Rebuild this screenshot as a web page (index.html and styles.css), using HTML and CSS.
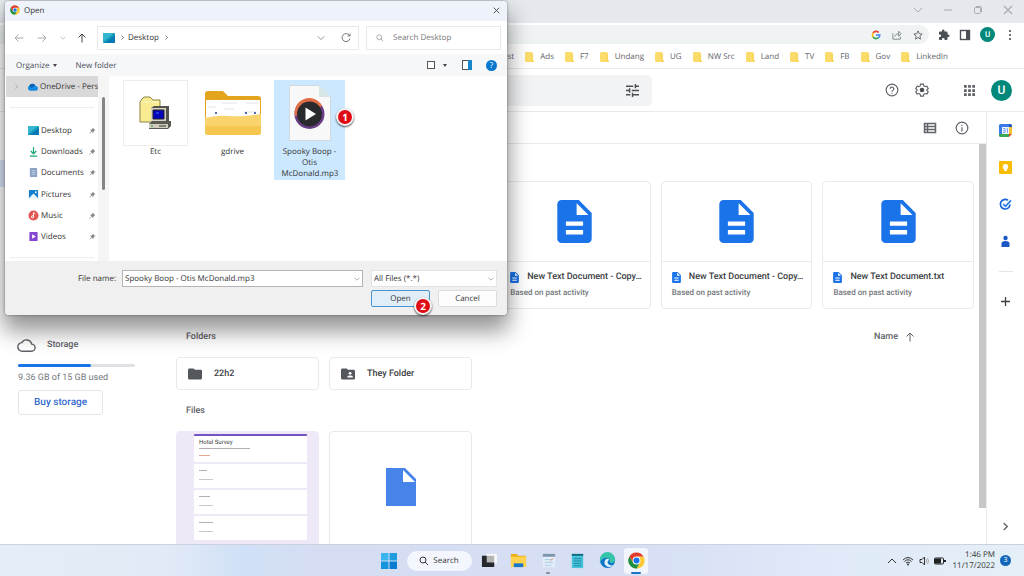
FILE: index.html
```html
<!DOCTYPE html>
<html lang="en">
<head>
<meta charset="utf-8">
<title>Google Drive</title>
<link rel="stylesheet" href="styles.css">
</head>
<body>
<svg class="defs" aria-hidden="true">
  <symbol id="chrome" viewBox="0 0 48 48">
    <path d="M24 13H44A23 23 0 0 1 24 47L34 29Z" fill="#fcc934"/>
    <path d="M14 29 4 12.500A23 23 0 0 0 24 47L34 29Z" fill="#1e8e3e"/>
    <path d="M24 13H44A23 23 0 0 0 4 12.500L14 29Z" fill="#e33b2e"/>
    <circle cx="24" cy="24" r="11" fill="#fff"/><circle cx="24" cy="24" r="8.500" fill="#1a73e8"/>
  </symbol>
  <symbol id="down" viewBox="0 0 10 10"><path d="M1 3 5 7 9 3" fill="none" stroke="currentColor"/></symbol>
  <symbol id="right" viewBox="0 0 10 10"><path d="M3 1 7 5 3 9" fill="none" stroke="currentColor" stroke-width="1.500"/></symbol>
  <symbol id="close" viewBox="0 0 10 10"><path d="M1 1 9 9M9 1 1 9" fill="none" stroke="currentColor" stroke-width="1.200"/></symbol>
  <symbol id="search" viewBox="0 0 10 10"><circle cx="4" cy="4" r="3" fill="none" stroke="currentColor"/><path d="M6 6 9 9" stroke="currentColor"/></symbol>
  <symbol id="doc" viewBox="4 2 16 20"><path d="M14 2H6a2 2 0 0 0-2 2v16a2 2 0 0 0 2 2h12a2 2 0 0 0 2-2V8Z" fill="#1a73e8"/><path d="M13 3.500V9h5.500Z" fill="#fff"/><path d="M8 12h8v2H8zM8 16h8v2H8z" fill="#fff"/></symbol>
  <symbol id="mark" viewBox="0 0 9 11"><path d="M0 1.500Q0 0 1.500 0H6l2 1v7l1 1v1H1.500Q0 10 0 8.500Z" fill="#fbdc6b"/><path d="M7 2v7h1.500" fill="none" stroke="#f5cf52"/></symbol>
  <symbol id="pin" viewBox="0 0 10 10"><path d="M5.500 1 9 4.500 8 5 6.500 6.500 6 9 1.500 4 4 3.500 5 2Z" fill="#85898d"/><path d="M3.500 6.500 1 9" stroke="#707478"/></symbol>
  <symbol id="desk" viewBox="0 0 12 10"><rect width="12" height="10" rx="1" fill="#129bb9"/><path d="M0 9V1q0-1 1-1h10Z" fill="#35b6d0"/><path d="M2 10 12 2v7q0 1-1 1Z" fill="#0879b5"/></symbol>
  <symbol id="uparrow" viewBox="0 0 10 10"><path d="M5 9.500V1M1.500 4.500 5 1 8.500 4.500" fill="none" stroke="currentColor"/></symbol>
</svg>

<div class="browser">
  <div class="titlebar">
    <button aria-label="Search tabs"><svg><use href="#down"/></svg></button>
    <button aria-label="Minimize"><svg viewBox="0 0 10 10"><path d="M1 5H9" stroke="currentColor"/></svg></button>
    <button aria-label="Restore"><svg viewBox="0 0 10 10"><rect x="1.500" y="2.500" width="6" height="6" rx="1" fill="none" stroke="currentColor"/><path d="M3 1.500H7Q8.500 1.500 8.500 3V7" fill="none" stroke="currentColor"/></svg></button>
    <button aria-label="Close"><svg><use href="#close"/></svg></button>
  </div>
  <div class="toolbar">
    <div class="omnibox">
      <svg viewBox="0 0 24 24"><g fill="none" stroke-width="4"><path d="M5 7A9 9 0 0 1 18.500 6" stroke="#ea4335"/><path d="M5 17A9 9 0 0 1 5 7" stroke="#fbbc05"/><path d="M18 18.500A9 9 0 0 1 5 17" stroke="#34a853"/><path d="M12 12H21A9 9 0 0 1 18 18.500" stroke="#4285f4"/></g></svg>
      <svg viewBox="0 0 12 12"><path d="M1 4V11H10V8M3 8Q4 4.500 8 4.500M8 1.500 11 4.500 8 7.500Z" fill="none" stroke="#74787c"/></svg>
      <svg viewBox="0 0 24 24"><path d="m12 2 3 7 7 .6-5.500 5L18 22l-6-4-6 4 1.500-7.400L2 9.600 9 9Z" fill="none" stroke="#5f6368" stroke-width="2.200"/></svg>
    </div>
    <button aria-label="Extensions"><svg viewBox="0 0 24 24"><path d="M20.500 11H19V7a2 2 0 0 0-2-2h-4V3.500a2.500 2.500 0 0 0-5 0V5H4a2 2 0 0 0-2 2v3.800h1.500a2.700 2.700 0 0 1 0 5.400H2V20a2 2 0 0 0 2 2h3.800v-1.500a2.700 2.700 0 0 1 5.400 0V22H17a2 2 0 0 0 2-2v-4h1.500a2.500 2.500 0 0 0 0-5Z" fill="#4c5054"/></svg></button>
    <button aria-label="Side panel"><svg viewBox="0 0 12 12"><rect x="1.500" y="1.500" width="9" height="9" fill="none" stroke="#4c5054" stroke-width="1.400"/><path d="M7 1H11V11H7Z" fill="#4c5054"/></svg></button>
    <button class="avatar small" aria-label="Profile">U</button>
    <button aria-label="Menu"><svg viewBox="0 0 12 12"><g fill="#4c5054"><circle cx="6" cy="2" r="1.100"/><circle cx="6" cy="6" r="1.100"/><circle cx="6" cy="10" r="1.100"/></g></svg></button>
  </div>
  <nav class="bookmarks">
    <a href="#">st</a>
    <a href="#"><svg><use href="#mark"/></svg>Ads</a>
    <a href="#"><svg><use href="#mark"/></svg>F7</a>
    <a href="#"><svg><use href="#mark"/></svg>Undang</a>
    <a href="#"><svg><use href="#mark"/></svg>UG</a>
    <a href="#"><svg><use href="#mark"/></svg>NW Src</a>
    <a href="#"><svg><use href="#mark"/></svg>Land</a>
    <a href="#"><svg><use href="#mark"/></svg>TV</a>
    <a href="#"><svg><use href="#mark"/></svg>FB</a>
    <a href="#"><svg><use href="#mark"/></svg>Gov</a>
    <a href="#"><svg><use href="#mark"/></svg>LinkedIn</a>
  </nav>
  <header class="drive-head">
    <div class="drive-search">
      <button aria-label="Search options"><svg viewBox="3 3 18 18"><path d="M3 17v2h6v-2zm0-12v2h10V5zm10 16v-2h8v-2h-8v-2h-2v6zM7 9v2H3v2h4v2h2V9zm14 4v-2H11v2zm-6-4h2V7h4V5h-4V3h-2z" fill="#4c5054"/></svg></button>
    </div>
    <div class="head-tools">
      <button aria-label="Help"><svg viewBox="0 0 24 24"><circle cx="12" cy="12" r="10" fill="none" stroke="#5f6368" stroke-width="2"/><path d="M9 10a3 3 0 1 1 5 2.200Q12 13.500 12 15" fill="none" stroke="#5f6368" stroke-width="2"/><path d="M11 16.500h2v2h-2z" fill="#5f6368"/></svg></button>
      <button aria-label="Settings"><svg viewBox="0 0 24 24"><path d="m9.500 2-.6 3-2.400 1.300L3.600 5.400 1.300 9.500l2.200 2v1.500l-2.200 2 2.300 4 2.900-.9L9 19.500l.6 2.900h4.800l.6-2.900 2.500-1.400 2.900.9 2.300-4-2.200-2v-1.500l2.200-2-2.300-4.100-2.900.9L15 5l-.6-3Z" fill="none" stroke="#5f6368" stroke-width="2"/><circle cx="12" cy="12" r="4" fill="#4c5054"/></svg></button>
      <button class="apps" aria-label="Google apps"><svg viewBox="0 0 12 12"><path d="M0 0h3v3H0zM4.500 0h3v3h-3zM9 0h3v3H9zM0 4.500h3v3H0zM4.500 4.500h3v3h-3zM9 4.500h3v3H9zM0 9h3v3H0zM4.500 9h3v3h-3zM9 9h3v3H9z" fill="#5f6368"/></svg></button>
      <button class="avatar" aria-label="Account">U</button>
    </div>
  </header>
  <div class="drive">
    <aside class="sidebar">
      <div class="current"></div>
      <div class="storage">
        <div class="storage-title">
          <svg viewBox="0 0 24 24"><path d="M19.300 10A7.500 7.500 0 0 0 5.400 8 6 6 0 0 0 6 20h13a5 5 0 0 0 .3-10Z" fill="none" stroke="#5f6368" stroke-width="2"/></svg>
          <span>Storage</span>
        </div>
        <div class="meter"><div class="meter-fill" style="width:62%"></div></div>
        <p>9.36 GB of 15 GB used</p>
        <button class="buy">Buy storage</button>
      </div>
    </aside>
    <main class="main">
      <div class="view-tools">
        <button aria-label="List view"><svg viewBox="0 0 14 12"><path d="M1.500 1.500H12.500V10.500H1.500ZM4.500 1V11M1 4.500H13M1 7.500H13" fill="none" stroke="#5f6368" stroke-width="1.500"/></svg></button>
        <button aria-label="Details"><svg viewBox="0 0 24 24"><circle cx="12" cy="12" r="10" fill="none" stroke="#5f6368" stroke-width="2"/><path d="M11 6.500h2v2h-2zM11 10.500h2V18h-2z" fill="#5f6368"/></svg></button>
      </div>
      <div class="scroller">
        <div class="content">
          <div class="suggested">
            <article class="card"><div class="card-preview"><svg><use href="#doc"/></svg></div><div class="card-info"><h3><svg><use href="#doc"/></svg>New Text Document - Copy…</h3><p>Based on past activity</p></div></article>
            <article class="card"><div class="card-preview"><svg><use href="#doc"/></svg></div><div class="card-info"><h3><svg><use href="#doc"/></svg>New Text Document - Copy…</h3><p>Based on past activity</p></div></article>
            <article class="card"><div class="card-preview"><svg><use href="#doc"/></svg></div><div class="card-info"><h3><svg><use href="#doc"/></svg>New Text Document.txt</h3><p>Based on past activity</p></div></article>
          </div>
          <div class="section-head"><h2>Folders</h2><button class="sort">Name<svg><use href="#uparrow"/></svg></button></div>
          <div class="tiles">
            <a class="folder" href="#"><svg viewBox="2 4 20 16"><path d="M10 4H4a2 2 0 0 0-2 2v12a2 2 0 0 0 2 2h16a2 2 0 0 0 2-2V8a2 2 0 0 0-2-2h-8Z" fill="#54575b"/></svg>22h2</a>
            <a class="folder" href="#"><svg viewBox="2 4 20 16"><path d="M10 4H4a2 2 0 0 0-2 2v12a2 2 0 0 0 2 2h16a2 2 0 0 0 2-2V8a2 2 0 0 0-2-2h-8Z" fill="#54575b"/><circle cx="15" cy="11" r="2" fill="#fff"/><path d="M11 17v-1q0-2 4-2t4 2v1Z" fill="#fff"/></svg>They Folder</a>
          </div>
          <div class="section-head"><h2>Files</h2></div>
          <div class="tiles">
            <div class="file survey">
              <div class="sheet first"><b>Hotel Survey</b><i class="line long"></i><i class="line warn"></i></div>
              <div class="sheet"><i class="line tiny"></i><i class="line pale"></i></div>
              <div class="sheet"><i class="line mid"></i><i class="line pale"></i></div>
              <div class="sheet"><i class="line"></i><i class="line pale"></i></div>
            </div>
            <div class="file"><svg viewBox="0 0 30 38"><path d="M0 0H19L30 11V38H0Z" fill="#4784ea"/><path d="M17 2V14H29Z" fill="#fff"/></svg></div>
          </div>
        </div>
        <div class="track"><div class="thumb"></div></div>
      </div>
    </main>
    <aside class="panel">
      <svg viewBox="0 0 13 13"><path d="M0 1.500Q0 0 1.500 0H10V3H3V10H0Z" fill="#3979e8"/><path d="M10 0h1.500Q13 0 13 1.500V3H10Z" fill="#1d57c1"/><path d="M10 3h3v7h-3Z" fill="#fbc02d"/><path d="M3 10h7v3H1.500Q0 13 0 11.500V10Z" fill="#34a853"/><path d="M10 10h3l-3 3Z" fill="#ea4335"/><path d="M3 3h7v7H3Z" fill="#eef3fd"/><path d="M4 4.500H6V8.500H4M4.500 6.500H6M7.500 5 8.500 4.500V9" fill="none" stroke="#77a7f5"/></svg>
      <svg viewBox="0 0 13 13"><rect width="13" height="13" rx="1" fill="#fbbc04"/><circle cx="6.500" cy="5.700" r="2.700" fill="#fff"/><path d="M5.200 8h2.600v2H5.200Z" fill="#fff"/></svg>
      <svg viewBox="0 0 13 13"><path d="M9 2.300A4.800 4.800 0 1 0 11 6.500" fill="none" stroke="#1a66d6" stroke-width="1.700"/><path d="M4.200 6.200 6.500 8.300 12 2.300" fill="none" stroke="#2a7cf0" stroke-width="1.800"/></svg>
      <svg viewBox="0 0 13 13"><circle cx="6.500" cy="3" r="2.200" fill="#1a57c4"/><path d="M2.500 12V8.500Q2.500 6 6.500 6T10.500 8.500V12Z" fill="#1a57c4"/></svg>
      <hr>
      <button aria-label="Get add-ons"><svg viewBox="0 0 13 13"><path d="M6.500 2V11M2 6.500H11" stroke="#3c4043" stroke-width="1.300"/></svg></button>
      <button class="hide" aria-label="Hide side panel"><svg><use href="#right"/></svg></button>
    </aside>
  </div>
</div>

<footer class="taskbar">
  <div class="pinned">
    <button class="start" aria-label="Start"><svg viewBox="0 0 16 16"><path d="M0 0h7.500v7.500H0z" fill="#38b4ee"/><path d="M8.500 0H16v7.500H8.500z" fill="#209ce0"/><path d="M0 8.500h7.500V16H0z" fill="#1494dd"/><path d="M8.500 8.500H16V16H8.500z" fill="#087cd0"/></svg></button>
    <button class="find"><svg><use href="#search"/></svg>Search</button>
    <div class="apps-row">
      <button aria-label="Task view"><svg viewBox="0 0 18 18"><path d="M6 2h11v10H6z" fill="#f8f8f8"/><path d="M5 4h9v8H5z" fill="#b4b4b4"/><path d="M1 4h5v7h8v5H1Z" fill="#25272a"/></svg></button>
      <button aria-label="File Explorer"><svg viewBox="0 0 18 18"><path d="M1 2h6l2 2h8v12H1Z" fill="#edae19"/><path d="M1 5h16v11H1z" fill="#ffd34e"/><path d="M4 12h10v4H4z" fill="#1777c9"/></svg></button>
      <button class="running" aria-label="Window"><svg viewBox="0 0 18 18"><path d="M3 2h13v14H3z" fill="#e3eefa"/><path d="M3 2h13v3H3z" fill="#7d94ad"/><path d="M5 8h7M5 11h9M5 14h7" stroke="#aac9e5"/><path d="M11 9 14 7" stroke="#e78b62"/></svg></button>
      <button aria-label="Notepad"><svg viewBox="0 0 18 18"><path d="M3 2h12v15H3z" fill="#45c3da"/><path d="M3 2h12v2H3z" fill="#15697e"/><path d="M5 7h8M5 9.500h8M5 12h8M5 14.500h8" stroke="#2389a3"/></svg></button>
      <button aria-label="Edge"><svg viewBox="0 0 18 18"><circle cx="9" cy="9" r="8" fill="#1276c8"/><path d="M1 8A8 8 0 0 1 17 8Q17 12 12 11.500 11 11 11.500 9 11 6 7.500 6 3 6 1 11Z" fill="#35c4aa"/><path d="M7 8Q4 12 8 15 12 17 15 14 10 14.500 9 11Q9 9 11 8.500 9 6 7 8Z" fill="#e1f2fb"/></svg></button>
      <button class="active" aria-label="Chrome"><svg><use href="#chrome"/></svg></button>
    </div>
  </div>
  <div class="tray">
    <svg viewBox="0 0 10 10"><path d="M1 7 5 3 9 7" fill="none" stroke="#333"/></svg>
    <svg class="wifi" viewBox="0 0 12 10"><path d="M1 4Q6-1 11 4M2.500 5.500Q6 2 9.500 5.500M4 7Q6 5 8 7" fill="none" stroke="#333"/><circle cx="6" cy="8.500" r="1" fill="#333"/></svg>
    <svg viewBox="0 0 10 10"><path d="M1 3.500H3L5.500 1V9L3 6.500H1Z" fill="none" stroke="#333"/><path d="M7 3Q8.500 5 7 7M8.500 2Q10.500 5 8.500 8" fill="none" stroke="#aaa"/></svg>
    <svg class="battery" viewBox="0 0 12 10"><rect x=".5" y="2" width="9" height="6" rx="1" fill="none" stroke="#222"/><path d="M1 2.500h6v5H1zM10 4h2v2h-2z" fill="#222"/></svg>
    <div class="clock"><span>1:46 PM</span><span>11/17/2022</span></div>
    <span class="count">3</span>
  </div>
</footer>

<section class="dialog" role="dialog" aria-label="Open">
  <div class="dialog-title"><svg class="logo"><use href="#chrome"/></svg><span>Open</span><button aria-label="Close"><svg><use href="#close"/></svg></button></div>
  <div class="dialog-nav">
    <div class="arrows">
      <svg viewBox="0 0 10 10"><path d="M9.500 5H1M4.500 1.500 1 5 4.500 8.500" fill="none" stroke="#aaa"/></svg>
      <svg viewBox="0 0 10 10"><path d="M.5 5H9M5.500 1.500 9 5 5.500 8.500" fill="none" stroke="#aaa"/></svg>
      <svg class="mini"><use href="#down"/></svg>
      <svg class="up"><use href="#uparrow"/></svg>
    </div>
    <div class="address">
      <svg class="place"><use href="#desk"/></svg><svg class="sep"><use href="#right"/></svg><span>Desktop</span><svg class="sep"><use href="#right"/></svg>
      <svg class="drop"><use href="#down"/></svg>
      <svg class="reload" viewBox="0 0 10 10"><path d="M8.500 2.500A4 4 0 1 0 9 5.500M9 .5V3H6.500" fill="none" stroke="#777"/></svg>
    </div>
    <label class="search-box"><svg><use href="#search"/></svg><input type="text" placeholder="Search Desktop" aria-label="Search Desktop"></label>
  </div>
  <div class="commands">
    <button>Organize<span class="caret"></span></button>
    <button>New folder</button>
    <div class="views">
      <svg viewBox="0 0 10 10"><rect x="1.500" y="1.500" width="7" height="7" fill="#fff" stroke="#555"/></svg>
      <span class="caret"></span>
      <svg class="split" viewBox="0 0 10 10"><rect x=".5" y=".5" width="9" height="9" fill="#fff" stroke="#555"/><path d="M6 0h4v10H6z" fill="#1685c9"/></svg>
      <span class="help">?</span>
    </div>
  </div>
  <div class="dialog-body">
    <nav class="places">
      <a class="cloud" href="#"><svg class="sep"><use href="#right"/></svg><svg class="ico" viewBox="0 0 12 8"><path d="M3 8A3 3 0 0 1 2.500 2.500 4 4 0 0 1 9.500 3 2.500 2.500 0 0 1 9.500 8Z" fill="#168be0"/><path d="M2.500 2.500A4 4 0 0 1 9 2L5 5Z" fill="#0a5fb4"/></svg><span>OneDrive - Personal</span></a>
      <div class="quick">
        <a href="#"><svg class="ico"><use href="#desk"/></svg><span>Desktop</span><svg class="pin"><use href="#pin"/></svg></a>
        <a href="#"><svg class="ico" viewBox="0 0 12 12"><path d="M6 1V8M3 5.500 6 8.500 9 5.500M2 11H10" fill="none" stroke="#18a779" stroke-width="1.300"/></svg><span>Downloads</span><svg class="pin"><use href="#pin"/></svg></a>
        <a href="#"><svg class="ico" viewBox="0 0 12 12"><rect x="2" y="1" width="8" height="10" rx="1" fill="#8ba2c4"/><path d="M4 4h4M4 6h4M4 8h4" stroke="#c3d0e4"/></svg><span>Documents</span><svg class="pin"><use href="#pin"/></svg></a>
        <a href="#"><svg class="ico" viewBox="0 0 12 12"><rect x="1" y="1" width="10" height="10" rx="1" fill="#1580cf"/><path d="M1 10 6 5 11 10V11H1Z" fill="#e8f6ff"/><circle cx="8.500" cy="3.500" r="1" fill="#fff"/></svg><span>Pictures</span><svg class="pin"><use href="#pin"/></svg></a>
        <a href="#"><svg class="ico" viewBox="0 0 12 12"><circle cx="6" cy="6" r="5.500" fill="#e25550"/><path d="M6 7.500V3L8 4" fill="none" stroke="#fff"/><circle cx="5" cy="7.500" r="1.200" fill="none" stroke="#fff"/></svg><span>Music</span><svg class="pin"><use href="#pin"/></svg></a>
        <a href="#"><svg class="ico" viewBox="0 0 12 12"><rect x="1.500" y="1" width="9" height="10" rx="1" fill="#8446d2"/><path d="M4.500 3.500 8.500 6 4.500 8.500Z" fill="#fff"/></svg><span>Videos</span><svg class="pin"><use href="#pin"/></svg></a>
      </div>
    </nav>
    <div class="side-scroll"><div></div></div>
    <div class="items">
      <div class="item">
        <div class="art boxed"><svg viewBox="0 0 34 34"><path d="M1 6 3 3 5 1h6l3 3h7v22H1Z" fill="#f8eb91" stroke="#8d8140"/><path d="M2 6h18" stroke="#fffac8"/><path d="m12 12 3-2h15v15l-2 3H12Z" fill="#55534e"/><path d="M12 12h15v14H12z" fill="#d5d1c4"/><path d="M14 14h11v9H14z" fill="#0505ba" stroke="#222"/><path d="M17 17h3" stroke="#4c6df5"/><path d="M10 28 13 25H32v5l-3 3H10Z" fill="#5b5953"/><path d="M10 28h19v4H10z" fill="#d0cdbf"/><path d="M20 30h7" stroke="#333"/><path d="M12 30h2" stroke="#1c9b36"/></svg></div>
        <span>Etc</span>
      </div>
      <div class="item">
        <div class="art"><svg class="wide" viewBox="0 0 58 46"><path d="M1 4Q1 1 4 1H19L24 6H54Q57 6 57 9V40H1Z" fill="#e3a51e"/><path d="M2 10H56V30H2Z" fill="#fff"/><path d="M18 13h15M42 13h12M4 17h8M20 19h10M40 22h12" stroke="#e0e3ea"/><path d="M11 22h2v2h-2zM41 22h2v2h-2zM50 22h2v2h-2z" fill="#5269b0"/><path d="M1 28Q14 25 25 26T57 24V42Q57 45 54 45H4Q1 45 1 42Z" fill="#f9d36b"/><path d="M1 36H57V42Q57 45 54 45H4Q1 45 1 42Z" fill="#f5c650"/></svg></div>
        <span>gdrive</span>
      </div>
      <div class="item selected">
        <div class="art"><svg class="tall" viewBox="0 0 42 56"><path d="M.5.5H30L41.500 12V55.500H.5Z" fill="#f8f8f8" stroke="#d1d9dd"/><path d="M30 .5V12H41.500Z" fill="#d9e6e6"/><circle cx="20.500" cy="29" r="15" fill="#693e86"/><path d="M6 31A14.500 14.500 0 0 1 33 21L20 30Z" fill="#e06d46"/><circle cx="20.500" cy="29" r="12.500" fill="#29292e"/><path d="M16.500 22.500 27 29 16.500 35.500Z" fill="#fff"/></svg></div>
        <span>Spooky Boop - Otis McDonald.mp3</span>
        <b class="badge one">1</b>
      </div>
    </div>
  </div>
  <form class="dialog-foot">
    <label for="name">File name:</label>
    <div class="combo"><input id="name" type="text" value="Spooky Boop - Otis McDonald.mp3"><svg><use href="#down"/></svg></div>
    <div class="combo type"><select aria-label="File type"><option>All Files (*.*)</option></select><svg><use href="#down"/></svg></div>
    <div class="actions">
      <button class="ok" type="button">Open<b class="badge two">2</b></button>
      <button type="button">Cancel</button>
    </div>
  </form>
</section>
</body>
</html>
```

FILE: styles.css
```css
* { box-sizing: border-box; }
body {
  margin: 0;
  height: 100vh;
  display: flex;
  flex-direction: column;
  overflow: hidden;
  background: #fff;
  color: #3c4043;
  font: 9px/12px Roboto, sans-serif;
  text-rendering: geometricPrecision;
}
.defs { display: none; }
svg { display: block; flex: none; width: 10px; height: 10px; overflow: visible; }
button { display: flex; align-items: center; justify-content: center; padding: 0; border: 0; background: none; color: inherit; font: inherit; text-rendering: inherit; }
a { color: inherit; text-decoration: none; }
h2, h3, p { margin: 0; font-size: 9px; font-weight: 500; }

/* Browser window */
.browser { flex: 1; min-height: 0; display: flex; flex-direction: column; }
.titlebar { display: flex; justify-content: flex-end; gap: 20px; height: 23px; padding: 5px 11px 8px; background: #e5e8ec; color: #a8acb0; }
.toolbar { display: flex; align-items: center; gap: 9px; height: 23px; padding-right: 8px; }
.omnibox { flex: 1; display: flex; align-items: center; justify-content: flex-end; gap: 11px; height: 19px; padding-right: 6px; border-radius: 0 10px 10px 0; background: #f0f3f4; }
.toolbar button svg { width: 12px; height: 12px; }
.avatar { width: 21px; height: 21px; border-radius: 50%; background: #00897b; color: #fff; font-size: 12px; font-weight: 500; }
.avatar.small { width: 15px; height: 15px; font-size: 8px; }
.bookmarks { display: flex; justify-content: flex-end; align-items: center; gap: 11px; height: 23px; padding-right: 76px; border-bottom: 1px solid #e8eaec; color: #5f6368; font: 8px/12px "Open Sans", sans-serif; }
.bookmarks a { display: flex; align-items: center; gap: 6px; }
.bookmarks svg { width: 9px; height: 11px; }

/* Drive header */
.drive-head { display: flex; align-items: center; justify-content: space-between; height: 43px; padding-right: 12px; border-bottom: 1px solid #e8eaec; }
.drive-search { display: flex; align-items: center; justify-content: flex-end; width: 476px; height: 31px; margin-left: 176px; padding-right: 13px; border-radius: 5px; background: #f1f3f4; }
.drive-search svg { width: 13px; height: 13px; }
.head-tools { display: flex; align-items: center; gap: 16px; }
.head-tools button svg { width: 14px; height: 14px; }
.head-tools .apps { margin-left: 19px; }
.head-tools .apps svg { width: 11px; height: 11px; }
.drive { flex: 1; min-height: 0; display: flex; }

/* Sidebar */
.sidebar { width: 176px; padding-top: 48px; }
.current { height: 27px; margin-right: 14px; border-radius: 0 14px 14px 0; background: #dbe5fb; }
.storage { display: flex; flex-direction: column; align-items: flex-start; margin-top: 148px; padding-left: 18px; }
.storage-title { display: flex; align-items: center; gap: 12px; height: 20px; color: #5f6368; font-weight: 500; }
.storage-title svg { width: 17px; height: 17px; }
.meter { width: 117px; height: 3px; margin-top: 9px; border-radius: 2px; background: #dfe1e4; }
.meter-fill { height: 3px; border-radius: 2px; background: #1a73e8; }
.storage p { margin-top: 5px; color: #74777b; font-weight: 400; line-height: 12px; }
.buy { height: 25px; margin-top: 6px; padding: 0 15px; border: 1px solid #e3e5e8; border-radius: 3px; color: #3369cb; font-size: 10px; font-weight: 500; }

/* Main column */
.main { flex: 1; min-width: 0; display: flex; flex-direction: column; }
.view-tools { display: flex; align-items: center; justify-content: flex-end; gap: 18px; height: 32px; padding-right: 17px; border-bottom: 1px solid #e8eaec; }
.view-tools svg { width: 14px; height: 14px; }
.scroller { flex: 1; min-height: 0; display: flex; }
.content { flex: 1; min-width: 0; padding: 37px 5px 0 0; overflow: hidden; }
.track { width: 7px; }
.thumb { height: 91%; background: #c6c7c8; }
.suggested { display: grid; grid-template-columns: repeat(5, 1fr); gap: 10px; margin-bottom: 17px; }
.card { border: 1px solid #eaebed; border-radius: 4px; min-width: 0; }
.card:first-child { grid-column-start: 3; }
.card-preview { display: flex; align-items: center; justify-content: center; height: 80px; border-bottom: 1px solid #eaebed; }
.card-preview svg { width: 35px; height: 43px; }
.card-info { padding: 9px 10px 8px; }
.card h3 { display: flex; align-items: center; gap: 8px; white-space: nowrap; }
.card h3 svg { width: 9px; height: 11px; }
.card p { margin-top: 3px; color: #74777b; font-size: 8px; line-height: 14px; }
.section-head { display: flex; align-items: center; justify-content: space-between; height: 20px; padding: 2px 59px 0 10px; margin-bottom: 11px; color: #5f6368; }
.sort { gap: 7px; font-weight: 500; }
.tiles { display: grid; grid-template-columns: repeat(auto-fill, 143px); gap: 10px; margin-bottom: 10px; }
.folder { display: flex; align-items: center; gap: 12px; height: 33px; padding-left: 11px; border: 1px solid #e7e9eb; border-radius: 4px; font-weight: 500; }
.folder svg { width: 14px; height: 12px; }
.file { display: flex; align-items: center; justify-content: center; height: 140px; padding-bottom: 29px; border: 1px solid #e7e9eb; border-radius: 4px 4px 0 0; }
.file > svg { width: 30px; height: 38px; }
.survey { flex-direction: column; justify-content: flex-start; gap: 2px; padding: 2px 11px 0 17px; border-color: #eee8f7; background: #eee8f7; }
.sheet { width: 100%; height: 24px; padding: 6px 5px; border-radius: 1px; background: #fff; }
.first { height: 28px; padding-top: 4px; border-top: 2px solid #7454c2; }
.sheet b { display: block; margin-bottom: 2px; font-size: 6px; line-height: 6px; font-weight: 400; }
.line { display: block; width: 14px; height: 1px; margin-bottom: 8px; background: #b0b0b3; }
.first .line { margin-bottom: 6px; }
.line.long { width: 51px; }
.line.warn { width: 11px; background: #e5aa96; }
.line.tiny { width: 8px; }
.line.mid { width: 11px; }
.line.pale { background: #c8c9cc; }
.panel { width: 38px; display: flex; flex-direction: column; align-items: center; gap: 24px; padding: 12px 0 13px; border-left: 1px solid #e8eaec; }
.panel svg { width: 13px; height: 13px; }
.panel hr { width: 14px; margin: -1px 0; border: 0; border-top: 1px solid #e2e4e6; }
.panel .hide { margin-top: auto; }
.panel .hide svg { width: 9px; height: 9px; color: #5f6368; }

/* Taskbar */
.taskbar { display: grid; grid-template-columns: 1fr auto 1fr; align-items: center; height: 32px; padding-left: 5px; border-top: 1px solid #cbd1de; background: linear-gradient(90deg, #e5edf8, #e2eaf7 16%, #d0e0f6 24%, #d5ddf3 31%, #d6dff4 62%, #dfe9f8 80%, #e4eff7); color: #333; font: 8px/11px "Open Sans", sans-serif; }
.pinned { grid-column: 2; display: flex; align-items: center; gap: 6px; }
.start { margin-right: 4px; }
.start svg { width: 16px; height: 16px; }
.find { gap: 4px; width: 65px; height: 20px; border-radius: 10px; background: #f3f6fc; }
.apps-row { display: flex; justify-content: space-between; width: 171px; }
.apps-row button { position: relative; width: 24px; height: 26px; border-radius: 3px; }
.apps-row svg { width: 17px; height: 17px; }
.active { background: #f2f5fb; }
.active::after, .running::after { content: ""; position: absolute; bottom: 0; width: 10px; height: 2px; border-radius: 1px; background: #1975c5; }
.running::after { width: 4px; background: #878d98; }
.tray { display: flex; align-items: center; justify-content: flex-end; gap: 5px; padding-right: 13px; }
.wifi, .battery { width: 12px; }
.clock { display: flex; flex-direction: column; align-items: flex-end; margin-left: 2px; padding-bottom: 1px; }
.count { width: 11px; height: 11px; border-radius: 50%; background: #1467b8; color: #fff; font-size: 7px; text-align: center; }

/* File picker */
.dialog { position: absolute; left: 5px; top: 1px; width: 502px; border-radius: 4px; background: #fff; box-shadow: 0 0 3px rgba(0, 0, 0, .4), 0 14px 22px 2px rgba(0, 0, 0, .42); color: #333; font: 8px/11px "Open Sans", sans-serif; }
.dialog input, .dialog select { min-width: 0; border: 0; padding: 0; outline: 0; background: none; color: inherit; font: inherit; text-rendering: inherit; }
.dialog-title { display: flex; align-items: center; gap: 4px; height: 20px; padding: 0 7px 2px 5px; border-radius: 4px 4px 0 0; background: #eef2fa; }
.dialog-title button { margin-left: auto; }
.dialog-title button svg { width: 7px; height: 7px; }
.dialog-title .logo { width: 10px; height: 10px; }
.dialog-nav { display: flex; align-items: center; gap: 7px; height: 33px; padding: 0 6px 0 9px; }
.arrows { display: flex; align-items: center; gap: 13px; width: 76px; color: #444; }
.arrows .mini { width: 6px; height: 6px; color: #999; }
.arrows .up { margin-left: -2px; }
.address { flex: 1; display: flex; align-items: center; gap: 5px; height: 24px; padding: 0 7px 0 5px; border: 1px solid #e9e9e9; }
.address .place { width: 12px; height: 10px; }
.address span { margin-left: -2px; }
.sep { width: 5px; height: 5px; color: #555; }
.address .drop { width: 8px; height: 8px; margin-left: auto; color: #777; }
.address .reload { margin-left: 11px; }
.search-box { display: flex; align-items: center; gap: 9px; width: 135px; height: 24px; padding: 0 9px; border: 1px solid #e9e9e9; color: #999; }
.search-box svg { width: 8px; height: 8px; }
.search-box input { flex: 1; }
.search-box input::placeholder { color: #777; }
.commands { display: flex; align-items: center; gap: 18px; height: 22px; padding: 0 10px 0 11px; background: #f6f7f9; color: #4a5058; }
.commands button { gap: 4px; }
.caret { border: 2px solid transparent; border-top: 3px solid #444; border-bottom: 0; }
.views { display: flex; align-items: center; gap: 7px; margin-left: auto; }
.split { margin-left: 8px; }
.help { width: 11px; height: 11px; margin-left: 7px; border-radius: 50%; background: #0878cf; color: #fff; text-align: center; }
.dialog-body { display: flex; height: 185px; }
.places { display: flex; flex-direction: column; width: 92px; margin-left: 1px; }
.places a { display: flex; align-items: center; gap: 2px; white-space: nowrap; }
.places .ico { width: 11px; height: 11px; }
.places .cloud { height: 21px; padding-left: 8px; overflow: hidden; background: #d9d9d9; }
.cloud .sep { margin-right: 6px; color: #999; }
.cloud .ico { height: 8px; }
.quick { display: grid; grid-auto-rows: 1fr; height: 151px; margin: 10px 4px 0; padding: 12px 0 10px; border: solid #eee; border-width: 1px 0; }
.quick a { padding-left: 18px; }
.pin { width: 7px; height: 7px; margin-left: auto; margin-right: -2px; }
.side-scroll { width: 11px; padding: 21px 4px 0; background: #f5f5f5; }
.side-scroll div { width: 3px; height: 93px; border-radius: 2px; background: #858585; }
.items { display: flex; align-items: flex-start; gap: 6px; padding: 4px 11px; }
.item { position: relative; display: flex; flex-direction: column; align-items: center; width: 71px; padding: 0 4px 1px; text-align: center; }
.item span { width: 56px; }
.selected { background: #cce8ff; }
.art { display: flex; flex: none; align-items: center; justify-content: center; width: 65px; height: 66px; }
.boxed { border: 1px solid #ededed; }
.art svg { width: 34px; height: 34px; }
.art .wide { width: 58px; height: 46px; }
.art .tall { width: 42px; height: 56px; }
.badge { position: absolute; width: 18px; height: 18px; border: 2px solid #f4f4f4; border-radius: 50%; background: #df0c16; box-shadow: 0 1px 2px rgba(0, 0, 0, .7); color: #fff; font-size: 10px; line-height: 14px; text-align: center; }
.badge.one { right: -9px; top: 28px; }
.badge.two { right: -3px; bottom: -9px; }
.dialog-foot { display: grid; grid-template-columns: 114px 1fr 126px; gap: 3px 0; padding: 9px 10px 8px 0; border-radius: 0 0 4px 4px; background: #f0f0f0; }
.dialog-foot label { padding-right: 3px; line-height: 17px; text-align: right; }
.combo { display: grid; align-items: center; height: 17px; margin: 0 8px 0 3px; padding: 0 2px; border: 1px solid #b5b5b5; background: #fff; }
.combo > * { grid-area: 1 / 1; }
.combo svg { justify-self: end; width: 6px; height: 6px; color: #777; pointer-events: none; }
.combo select { appearance: none; }
.combo.type { margin: 0; border-color: #e3e3e3; }
.actions { grid-column: 3; display: grid; grid-template-columns: 1fr 1fr; gap: 8px; }
.actions button { position: relative; height: 17px; border: 1px solid #dcdcdc; border-radius: 2px; background: #fdfdfd; }
.actions .ok { border-color: #4a94cf; background: #e0eef9; }
```
